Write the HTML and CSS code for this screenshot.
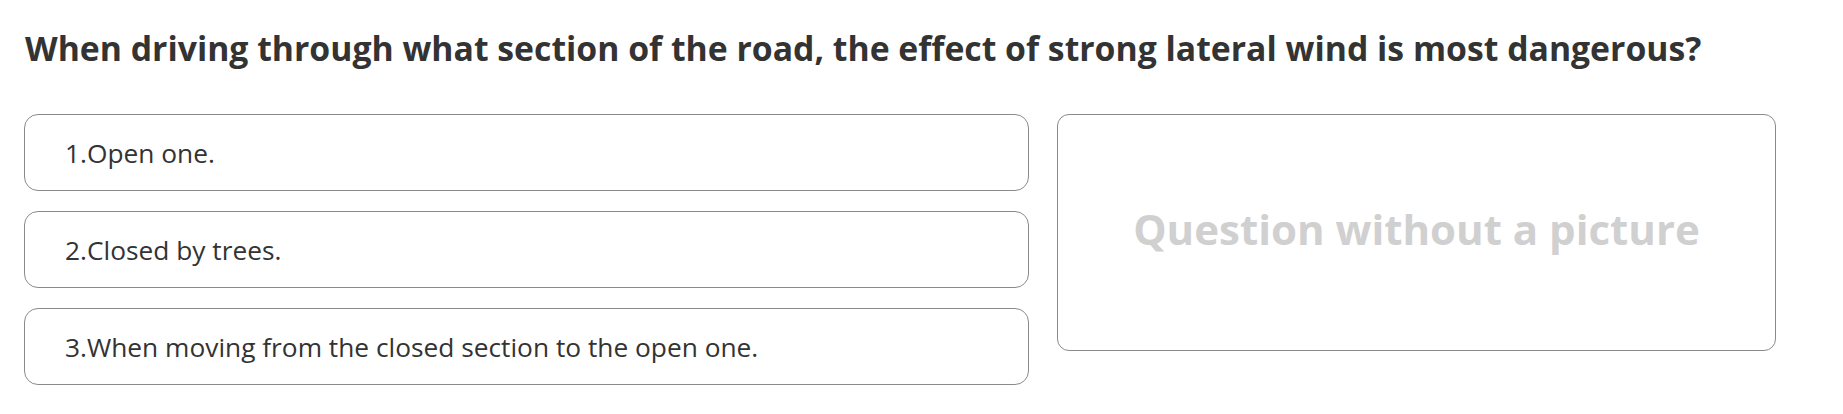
FILE: index.html
```html
<!DOCTYPE html>
<html lang="en">
<head>
<meta charset="utf-8">
<title>Question</title>
<link rel="stylesheet" href="styles.css">
</head>
<body>
<div class="page">
  <h1 class="question">When driving through what section of the road, the effect of strong lateral wind is most dangerous?</h1>
  <div class="content">
    <div class="answers">
      <div class="answer">1.Open one.</div>
      <div class="answer">2.Closed by trees.</div>
      <div class="answer">3.When moving from the closed section to the open one.</div>
    </div>
    <div class="picture">
      <span class="no-picture">Question without a picture</span>
    </div>
  </div>
</div>
</body>
</html>
```
FILE: styles.css
```css
html, body {
  margin: 0;
  padding: 0;
  background: #ffffff;
}
body {
  font-family: "Open Sans", "Liberation Sans", sans-serif;
  color: #333333;
}
.page {
  padding: 26px 24px 0 24px;
}
.question {
  margin: 0 0 0 1px;
  font-size: 33.75px;
  line-height: 44px;
  font-weight: 700;
  color: #333333;
}
.content {
  margin-top: 44px;
  display: grid;
  grid-template-columns: 1005px 719px;
  column-gap: 28px;
  align-items: start;
}
.answers {
  display: flex;
  flex-direction: column;
  gap: 20px;
}
.answer {
  box-sizing: border-box;
  height: 77px;
  border: 1px solid #8a8a8a;
  border-radius: 14px;
  padding: 0 40px;
  display: flex;
  align-items: center;
  font-size: 26.3px;
  color: #333333;
}
.picture {
  box-sizing: border-box;
  height: 237px;
  border: 1px solid #8a8a8a;
  border-radius: 12px;
  padding-bottom: 8px;
  display: flex;
  align-items: center;
  justify-content: center;
}
.no-picture {
  font-size: 42px;
  font-weight: 700;
  color: #d0d0d0;
}
```
